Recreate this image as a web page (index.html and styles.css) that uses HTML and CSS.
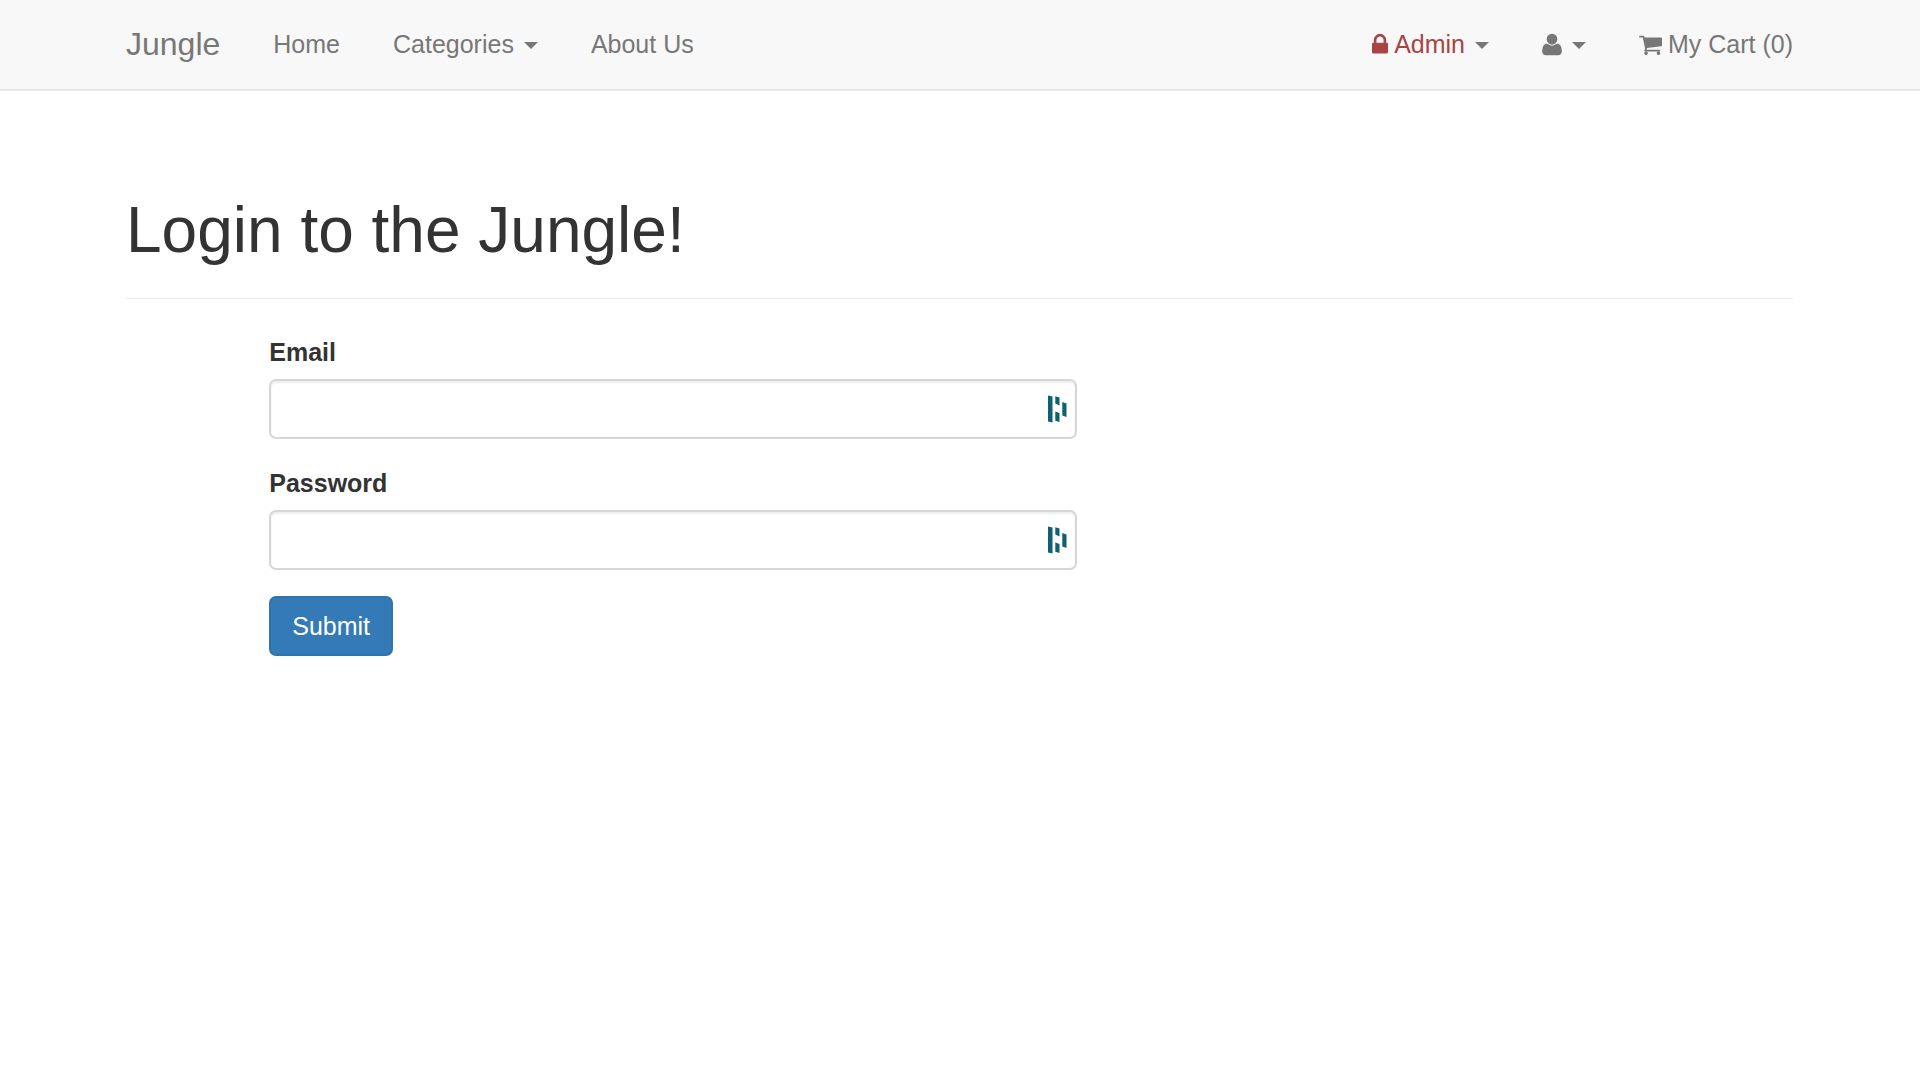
FILE: index.html
```html
<!DOCTYPE html>
<html lang="en">
<head>
  <meta charset="utf-8">
  <meta name="viewport" content="width=device-width, initial-scale=1">
  <title>Jungle</title>
  <link rel="stylesheet" href="styles.css">
</head>
<body>
  <nav class="navbar">
    <div class="container navbar-inner">
      <a class="brand" href="#">Jungle</a>
      <a class="nav-link" href="#">Home</a>
      <a class="nav-link" href="#">Categories <span class="caret"></span></a>
      <a class="nav-link" href="#">About Us</a>
      <div class="nav-right">
        <a class="nav-link" href="#"><span class="nav-admin"><svg class="icon icon-lock" viewBox="0 0 1152 1792" aria-hidden="true"><path d="M320 768h512v-192q0-106-75-181t-181-75-181 75-75 181v192zm832 96v576q0 40-28 68t-68 28h-960q-40 0-68-28t-28-68v-576q0-40 28-68t68-28h32v-192q0-184 132-316t316-132 316 132 132 316v192h32q40 0 68 28t28 68z"/></svg>Admin</span> <span class="caret"></span></a>
        <a class="nav-link" href="#" aria-label="Account"><svg class="icon icon-user" viewBox="192 0 1408 1792" aria-hidden="true"><path d="M1600 1405q0 120-73 189.5t-194 69.5h-874q-121 0-194-69.5t-73-189.5q0-53 3.5-103.5t14-109 26.5-108.5 43-97.5 62-81 85.5-53.5 111.5-20q9 0 42 21.5t74.5 48 108 48 133.5 21.5 133.5-21.5 108-48 74.5-48 42-21.5q61 0 111.5 20t85.5 53.5 62 81 43 97.5 26.5 108.5 14 109 3.5 103.5zm-320-893q0 159-112.5 271.5t-271.5 112.5-271.5-112.5-112.5-271.5 112.5-271.5 271.5-112.5 271.5 112.5 112.5 271.5z"/></svg><span class="caret"></span></a>
        <a class="nav-link" href="#"><svg class="icon icon-cart" viewBox="64 0 1664 1792" aria-hidden="true"><path d="M704 1536q0 52-38 90t-90 38-90-38-38-90 38-90 90-38 90 38 38 90zm896 0q0 52-38 90t-90 38-90-38-38-90 38-90 90-38 90 38 38 90zm128-1088v512q0 24-16.500 42.500t-40.500 21.500l-1044 122q13 60 13 70 0 16-24 64h920q26 0 45 19t19 45-19 45-45 19h-1024q-26 0-45-19t-19-45q0-11 8-31.500t16-36 21.500-40 15.500-29.500l-177-823h-204q-26 0-45-19t-19-45 19-45 45-19h256q16 0 28.500 6.500t19.500 15.500 13 24.500 8 26 5.500 29.500 4.500 26h1201q26 0 45 19t19 45z"/></svg>My Cart (0)</a>
      </div>
    </div>
  </nav>

  <main class="container">
    <header class="page-header">
      <h1>Login to the Jungle!</h1>
    </header>
    <div class="grid">
      <form class="login-form">
        <div class="field">
          <label for="email">Email</label>
          <div class="input-wrap">
            <input id="email" type="email" name="email">
            <svg class="input-mark" viewBox="0 0 20 28" aria-hidden="true"><path d="M0 .5l4.500 1v26l-4.500-1zM7.300 1.200l4.200 1.300v8l-4.200-2zM7.300 16.500l4.200 1.500v9l-4.200-1.300zM14.300 7l4.200 1.500v13.500l-4.200-1.500z"/></svg>
          </div>
        </div>
        <div class="field">
          <label for="password">Password</label>
          <div class="input-wrap">
            <input id="password" type="password" name="password">
            <svg class="input-mark" viewBox="0 0 20 28" aria-hidden="true"><path d="M0 .5l4.500 1v26l-4.500-1zM7.300 1.200l4.200 1.300v8l-4.200-2zM7.300 16.500l4.200 1.500v9l-4.200-1.300zM14.300 7l4.200 1.500v13.500l-4.200-1.500z"/></svg>
          </div>
        </div>
        <button class="button" type="submit">Submit</button>
      </form>
    </div>
  </main>
</body>
</html>
```
FILE: styles.css
```css
* {
  box-sizing: border-box;
}

body {
  margin: 0;
  background: #fff;
  color: #333;
  font-family: "Liberation Sans", Arial, sans-serif;
  font-size: 25px;
  line-height: 36px;
}

.container {
  max-width: 1720px;
  margin: 0 auto;
  padding: 0 27px 0 26px;
}

.navbar {
  background: #f8f8f8;
  border-bottom: 2px solid #e9e9e9;
}

.navbar-inner,
.nav-right {
  display: flex;
  align-items: center;
  column-gap: 53px;
}

.navbar-inner {
  min-height: 89px;
  padding-bottom: 1px;
}

.nav-right {
  margin-left: auto;
}

.brand,
.nav-link {
  color: #777;
  text-decoration: none;
  white-space: nowrap;
}

.brand {
  font-size: 32px;
}

.nav-link,
.nav-admin {
  display: flex;
  align-items: center;
}

.nav-admin {
  color: #a94442;
}

.caret {
  margin: 2px 0 0 10px;
  border-top: 7px solid;
  border-left: 7px solid transparent;
  border-right: 7px solid transparent;
}

.icon {
  height: 25px;
  fill: currentColor;
}

.icon-lock {
  width: 16px;
  margin-right: 6px;
}

.icon-user {
  width: 20px;
}

.icon-cart {
  width: 23px;
  margin-right: 6px;
}

.page-header {
  margin: 104px 0 35px;
  padding-bottom: 33px;
  border-bottom: 1px solid #eaeaea;
}

h1 {
  margin: 0;
  font-size: 64px;
  font-weight: 500;
  line-height: 70px;
}

.grid {
  display: grid;
  grid-template-columns: repeat(12, 1fr);
  column-gap: 52px;
}

.login-form {
  grid-column: 2 / span 6;
}

.field {
  margin-bottom: 26px;
}

label {
  display: block;
  margin-bottom: 9px;
  font-weight: 700;
}

.input-wrap {
  position: relative;
}

input {
  display: block;
  width: 100%;
  height: 60px;
  padding: 10px 48px 10px 21px;
  border: 2px solid #d6d6d6;
  border-radius: 7px;
  background: #fff;
  color: #555;
  font: inherit;
  box-shadow: inset 0 2px 2px rgba(0, 0, 0, 0.075);
}

.input-mark {
  position: absolute;
  top: 16px;
  right: 9px;
  width: 20px;
  height: 28px;
  fill: #0e6073;
}

.button {
  height: 60px;
  padding: 0 21px;
  border: 2px solid #3173ae;
  border-radius: 7px;
  background: #337ab7;
  color: #fff;
  font: inherit;
}
```
